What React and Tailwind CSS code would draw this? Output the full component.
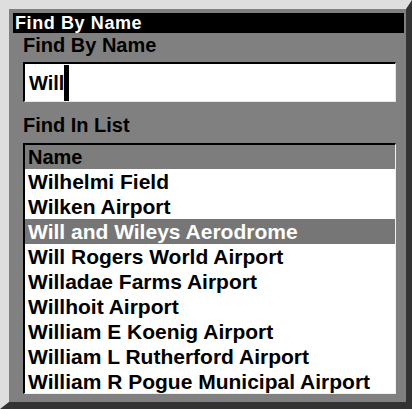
import React from 'react';

const airports = [
    'Wilhelmi Field',
    'Wilken Airport',
    'Will and Wileys Aerodrome',
    'Will Rogers World Airport',
    'Willadae Farms Airport',
    'Willhoit Airport',
    'William E Koenig Airport',
    'William L Rutherford Airport',
    'William R Pogue Municipal Airport',
];

const selected = 2;

const App = () => {
    return (
        <div className="w-[412px] h-[409px] bg-white" style={{ fontFamily: '"Liberation Sans", Arial, sans-serif' }}>
            <div className="w-full h-full flex flex-col bg-[#808080] border-l-[9px] border-t-[9px] border-r-[6px] border-b-[7px] border-l-[#dedede] border-t-[#dedede] border-r-[#333333] border-b-[#333333]">
                {/* Title bar */}
                <div className="mt-[4px] ml-[4px] mr-[2px] h-[20px] bg-black text-white font-bold text-[18px] leading-[20px] tracking-[0.6px] pl-[2px]">
                    Find By Name
                </div>

                <div className="flex flex-col pl-[14px] pr-[10px]">
                    {/* Search field */}
                    <div className="mt-[2px] h-[20px] text-[20px] leading-[20px] font-bold text-black">Find By Name</div>
                    <div className="mt-[7px] h-[40px] bg-white border-t-2 border-l-2 border-t-black border-l-black border-r border-b border-r-[#e8e8e8] border-b-[#e8e8e8] flex items-center pl-[4px]">
                        <span className="text-[20px] leading-[20px] font-bold text-black">Will</span>
                        <span className="w-[5px] h-[36px] bg-black" />
                    </div>

                    {/* List */}
                    <div className="mt-[13px] h-[20px] text-[20px] leading-[20px] font-bold text-black">Find In List</div>
                    <div className="mt-[8px] h-[251px] bg-white border-t-2 border-l-2 border-t-black border-l-black border-r border-b border-r-[#f0f0f0] border-b-[#f0f0f0] flex flex-col overflow-hidden">
                        <div className="h-[24px] shrink-0 bg-[#7d7d7d] flex items-center pl-[3px] text-[20px] font-bold text-black">
                            Name
                        </div>
                        {airports.map((name, i) => (
                            <div
                                key={name}
                                className={`h-[25px] shrink-0 flex items-center pl-[3px] text-[21px] font-bold whitespace-nowrap ${
                                    i === selected ? 'bg-[#767676] text-white' : 'text-black'
                                }`}
                            >
                                {name}
                            </div>
                        ))}
                    </div>
                </div>
            </div>
        </div>
    );
};

export default App;
